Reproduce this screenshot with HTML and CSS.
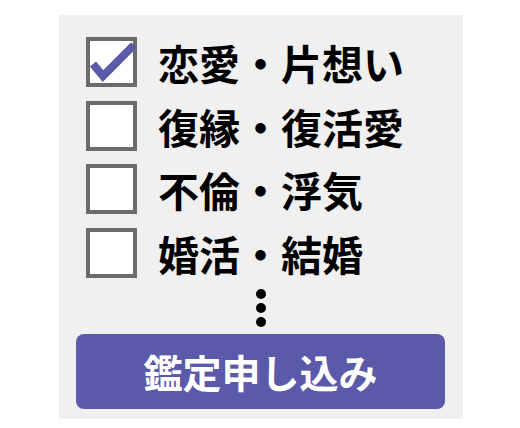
FILE: index.html
```html
<!DOCTYPE html>
<html lang="ja">
<head>
<meta charset="utf-8">
<link rel="stylesheet" href="styles.css">
</head>
<body>
<div class="panel">
  <ul class="list">
    <li class="row">
      <span class="box checked">
        <svg class="check" viewBox="0 0 60 50" width="60" height="50"><polyline points="7,27 17,39 48,8" fill="none" stroke="#5b59a9" stroke-width="8" stroke-linecap="butt" stroke-linejoin="miter"/></svg>
      </span>
      <span class="label">恋愛・片想い</span>
    </li>
    <li class="row"><span class="box"></span><span class="label">復縁・復活愛</span></li>
    <li class="row"><span class="box"></span><span class="label">不倫・浮気</span></li>
    <li class="row"><span class="box"></span><span class="label">婚活・結婚</span></li>
  </ul>
  <div class="dots"><span></span><span></span><span></span></div>
  <button class="btn">鑑定申し込み</button>
</div>
</body>
</html>
```
FILE: styles.css
```css
html, body {
  margin: 0;
  padding: 0;
  background: #ffffff;
}
body {
  font-family: "Noto Sans CJK JP", "Noto Sans", sans-serif;
}
.panel {
  margin: 15px 0 0 59px;
  width: 404px;
  height: 404px;
  box-sizing: border-box;
  background: #f0f0f0;
  padding: 22px 0 0 27px;
  display: flex;
  flex-direction: column;
}
.list {
  list-style: none;
  margin: 0;
  padding: 0;
  display: flex;
  flex-direction: column;
  gap: 13.7px;
}
.row {
  display: flex;
  align-items: center;
  height: 50px;
}
.box {
  position: relative;
  width: 51px;
  height: 50px;
  box-sizing: border-box;
  border: 4px solid #6b6b6b;
  background: #ffffff;
  flex: none;
}
.check {
  position: absolute;
  left: -4px;
  top: -4px;
  overflow: visible;
}
.label {
  margin-left: 21px;
  font-size: 41px;
  font-weight: 700;
  color: #000;
  line-height: 50px;
  letter-spacing: 0;
}
.dots {
  display: flex;
  flex-direction: column;
  align-items: center;
  gap: 4px;
  margin: 11px 0 0 -27px;
}
.dots span {
  width: 10px;
  height: 10px;
  border-radius: 50%;
  background: #000;
}
.btn {
  margin: 7px 0 0 -10px;
  width: 369px;
  height: 75px;
  border: none;
  border-radius: 8px;
  background: #5b59a9;
  color: #ffffff;
  font-family: "Noto Sans CJK JP", "Noto Sans", sans-serif;
  font-size: 39px;
  font-weight: 700;
  padding: 0;
  line-height: 75px;
}
```
